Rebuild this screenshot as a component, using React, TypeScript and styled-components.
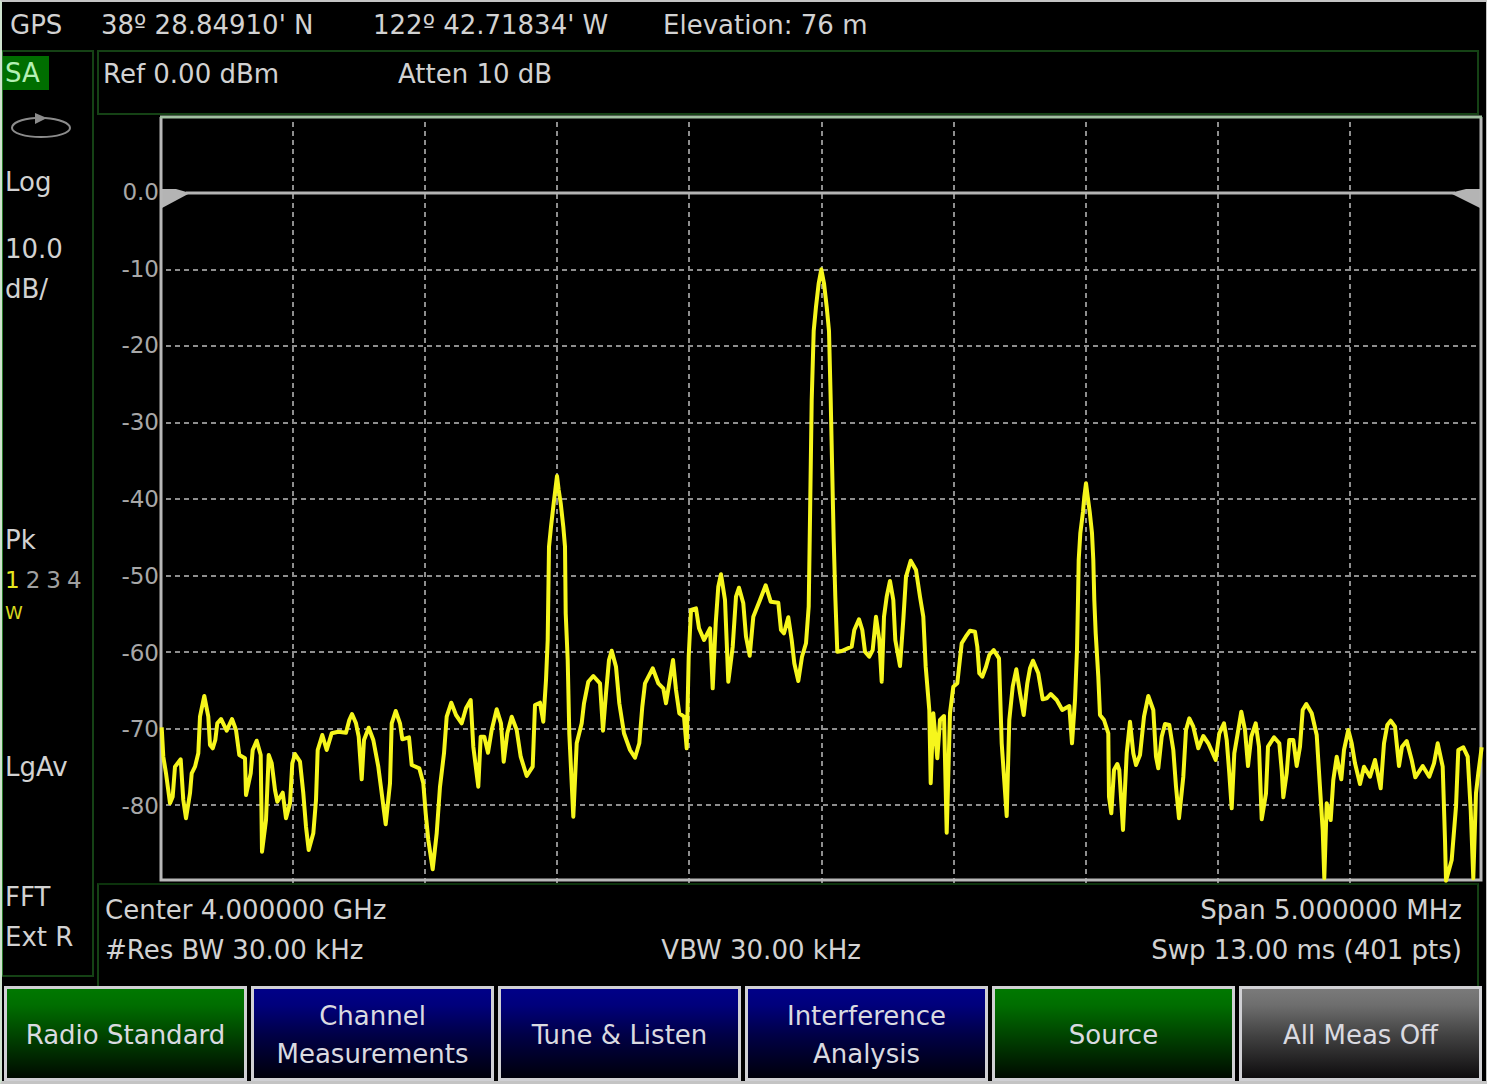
import React from "react";
import styled, { createGlobalStyle } from "styled-components";

const GlobalStyle = createGlobalStyle`
  *, *::before, *::after { box-sizing: border-box; }
  body {
    margin: 0;
    background: #000;
    color: #d2d2d2;
    font-family: "DejaVu Sans", Verdana, sans-serif;
    font-size: 26px;
    line-height: 40px;
  }
`;

const line = "#154215";

const Screen = styled.div`
  display: flex;
  flex-direction: column;
  min-height: 100vh;
  border: solid #c4c4c4;
  border-width: 2px 1px 3px 2px;
  border-left-color: #cfe3cf;
  background: #000;
`;

const GpsBar = styled.header`
  display: grid;
  grid-template-columns: 91px 272px 290px 1fr;
  padding: 3px 8px 5px;
  white-space: nowrap;
`;

const Body = styled.div`
  flex: 1;
  display: flex;
  gap: 3px;
`;

const Sidebar = styled.aside`
  display: flex;
  flex-direction: column;
  flex: 0 0 92px;
  margin-bottom: 9px;
  padding: 4px 0 18px 2px;
  border: 2px solid ${line};
  border-left: 1px solid #2a7a2a;
  white-space: nowrap;
`;

const ModeBadge = styled.div`
  align-self: flex-start;
  margin-left: -2px;
  padding: 0 9px 0 2px;
  background: #006e00;
  color: #b4f0b4;
  line-height: 34px;
`;

const SweepIcon = styled.svg`
  flex: none;
  width: 64px;
  height: 30px;
  margin: 20px 0 22px 4px;
`;

const Group = styled.div`
  & + & {
    margin-top: 27px;
  }
`;

const Spacer = styled.div<{ $grow: number }>`
  flex: ${(p) => p.$grow} 0 0;
`;

const Traces = styled.div`
  display: flex;
  gap: 6px;
  color: #a0a0a0;
  font-size: 23px;
`;

const ActiveTrace = styled.span`
  color: #e6e61e;
`;

const TraceMode = styled.div`
  color: #d8d81e;
  font-size: 18px;
  line-height: 26px;
`;

const Main = styled.main`
  flex: 1;
  display: flex;
  flex-direction: column;
  min-width: 0;
`;

const LevelBox = styled.section`
  display: grid;
  grid-template-columns: 295px 1fr;
  margin-right: 7px;
  padding: 2px 4px 19px;
  border: 2px solid ${line};
`;

const PlotArea = styled.section`
  flex: 1;
  display: flex;
`;

const Scale = styled.div`
  display: grid;
  grid-template-rows: 1fr repeat(9, 2fr) 1fr;
  align-items: center;
  justify-items: end;
  flex: 0 0 63px;
  padding-right: 1px;
  color: #a8a8a8;
  font-size: 23px;
  line-height: 26px;
`;

const Plot = styled.svg`
  flex: 1;
  min-width: 0;
  height: auto;
  min-height: 400px;
  overflow: visible;
`;

const SweepBox = styled.section`
  margin-right: 7px;
  padding: 5px 15px 16px 6px;
  border: 2px solid ${line};
  border-bottom: 0;
  border-top-color: #0c330c;
`;

const SweepRow = styled.div`
  display: flex;
  white-space: nowrap;
`;

const SweepStart = styled.span`
  flex: 0 0 41%;
`;

const SweepEnd = styled.span`
  margin-left: auto;
`;

const fills = {
  green: "linear-gradient(#007a00, #006e00 20%, #003c00 58%, #000600)",
  blue: "linear-gradient(#00008a, #00007c 20%, #000046 52%, #000006)",
  gray: "linear-gradient(#7c7c7c, #6e6e6e 20%, #424242 52%, #0a080a)",
};

const Softkeys = styled.nav`
  display: grid;
  grid-template-columns: repeat(6, minmax(0, 1fr));
  gap: 4px;
  padding: 0 4px 0 2px;
`;

const Softkey = styled.button<{ $fill: keyof typeof fills }>`
  height: 95px;
  padding: 2px 12px 0;
  border: 3px solid #d0d0d4;
  background: ${(p) => fills[p.$fill]};
  background-origin: border-box;
  color: #dadae0;
  font: inherit;
  line-height: 38px;
  cursor: pointer;
`;

/* Each block of the sweep has an origin in plot units; its points are in thirds of a unit. */
type Block = { x: number; y: number; points: [number, number][] };

const sweep: Block[] = [
  {
    x: 160,
    y: 640,
    points: [
      [5, 262], [10, 350], [18, 400], [30, 490], [38, 470], [45, 380], [62, 358], [70, 480], [78, 535],
      [90, 460], [95, 400], [105, 380], [115, 340], [120, 230], [133, 168], [145, 230], [150, 315],
      [158, 325], [166, 300], [172, 250], [183, 237], [200, 272], [216, 237], [228, 270], [238, 345],
      [255, 355], [258, 465], [272, 400], [278, 330], [290, 302], [302, 345], [306, 635], [318, 540],
      [326, 345], [335, 370], [345, 450], [352, 485], [368, 458], [378, 535], [390, 490], [397, 370],
      [405, 342], [420, 365], [430, 460], [438, 560], [446, 630], [460, 580], [468, 480], [473, 330],
      [487, 285], [500, 330], [515, 280], [535, 275], [558, 278], [568, 240], [576, 222], [588, 250],
      [596, 290], [605, 418], [612, 300], [626, 263], [640, 300], [655, 380], [664, 450], [677, 553],
      [690, 430], [695, 250], [707, 213], [720, 250], [727, 298], [747, 292], [755, 375], [778, 385],
      [790, 430], [797, 520], [805, 600],
    ],
  },
  {
    x: 430,
    y: 460,
    points: [
      [8, 1228], [20, 1120], [30, 980], [42, 880], [50, 770], [64, 728], [78, 765], [95, 790],
      [108, 745], [122, 720], [130, 860], [145, 980], [152, 830], [163, 830], [174, 878], [185, 810],
      [200, 748], [213, 790], [221, 905], [232, 820], [245, 770], [260, 810], [272, 890], [290, 948],
      [308, 920], [315, 735], [330, 728], [340, 785], [348, 660], [353, 540], [357, 260], [363, 200],
      [371, 130], [376, 90], [381, 48], [386, 90], [392, 130], [400, 200], [405, 260], [407, 460],
      [413, 600], [418, 820], [430, 1070], [440, 850],
      [455, 790], [462, 730], [475, 665], [490, 648], [510, 670], [519, 812], [528, 700], [537, 600],
      [545, 572], [558, 620], [568, 730], [582, 820], [600, 870], [615, 893], [628, 850], [637, 740],
      [645, 670], [668, 625], [685, 670], [700, 685], [708, 730], [716, 680], [729, 600], [738, 690],
      [748, 760], [762, 770],
    ],
  },
  {
    x: 660,
    y: 540,
    points: [
      [80, 625], [86, 350], [93, 210], [108, 205], [117, 265], [132, 300], [150, 265], [158, 445],
      [167, 250], [175, 140], [183, 103], [195, 180], [205, 425], [218, 320], [228, 170], [237, 143],
      [250, 190], [258, 290], [269, 347], [280, 230], [300, 180], [317, 136], [332, 185], [355, 188],
      [363, 270], [372, 280], [385, 232], [395, 300], [403, 370], [415, 423], [426, 350], [438, 310],
      [446, 200], [449, 0], [455, -420], [461, -627], [468, -700], [476, -770], [484, -812],
      [492, -770], [500, -700], [507, -627], [512, -420], [521, 0], [526, 170], [532, 335],
      [545, 333], [575, 320], [583, 270],
      [597, 238], [607, 270], [615, 335], [628, 350], [638, 330], [648, 230], [658, 300], [665, 425],
      [672, 230], [680, 170], [690, 123], [700, 180], [706, 300], [720, 378], [730, 240], [738, 110],
      [752, 62], [768, 90], [780, 170], [790, 230], [797, 380], [808, 510], [812, 730], [820, 520],
      [832, 655], [840, 540], [852, 528],
    ],
  },
  {
    x: 900,
    y: 600,
    points: [
      [140, 698], [150, 340], [160, 260], [172, 250], [185, 130], [197, 110], [210, 92], [225, 95],
      [232, 140], [238, 220], [247, 230], [258, 200], [268, 165], [281, 150], [297, 175], [305, 430],
      [320, 648], [328, 360], [338, 260], [349, 208], [360, 280], [371, 345], [382, 250], [390, 205],
      [399, 182], [415, 220], [428, 298], [440, 295], [452, 282], [470, 300], [487, 330], [508, 318],
      [516, 430], [525, 300], [531, 150], [534, 0], [536, -120], [541, -200], [549, -265],
      [553, -310], [558, -350], [563, -310], [569, -265], [576, -200], [580, -120], [583, 0],
      [587, 100], [595, 230], [600, 345], [612, 360], [625, 400],
      [627, 590], [634, 640], [642, 510], [652, 492], [658, 510], [669, 690], [680, 460], [690, 365],
      [700, 460], [708, 495], [720, 465], [732, 350], [745, 288], [760, 330], [768, 470], [775, 505],
      [785, 410], [795, 372], [808, 375], [820, 450], [828, 560], [837, 655],
    ],
  },
  {
    x: 1180,
    y: 660,
    points: [
      [10, 350], [18, 210], [28, 175], [40, 200], [55, 265], [70, 228], [85, 250], [107, 300],
      [118, 220], [132, 190], [140, 240], [148, 340], [155, 445], [163, 280], [173, 220], [184, 155],
      [195, 210], [204, 318], [214, 230], [227, 190], [237, 260], [245, 478], [258, 400], [264, 260],
      [282, 232], [298, 250], [305, 330], [310, 412], [320, 340], [328, 240], [340, 240], [350, 318],
      [360, 260], [368, 150], [379, 132], [395, 160], [410, 225], [418, 350], [428, 510], [433, 655],
      [440, 430], [452, 480], [460, 360], [470, 290], [484, 358], [492, 270], [505, 210], [515, 250],
      [525, 310], [540, 372], [552, 320], [570, 350], [585, 300], [602, 385], [612, 250], [622, 195],
      [632, 182], [645, 200], [657, 318], [666, 260], [680, 243], [695, 300], [706, 352], [728, 318],
      [748, 350], [762, 310], [773, 250], [788, 320], [795, 540], [798, 662], [815, 600], [828, 440],
      [835, 270], [850, 262], [863, 290], [872, 450], [880, 655], [888, 400], [895, 340], [905, 262],
    ],
  },
];

const tracePoints = sweep
  .flatMap((b) => b.points.map(([x, y]) => `${(b.x + x / 3).toFixed(1)},${(b.y + y / 3).toFixed(1)}`))
  .join(" ");

const levels = ["0.0", "-10", "-20", "-30", "-40", "-50", "-60", "-70", "-80"];
const columns = [293, 425, 557, 689, 822, 954, 1086, 1218, 1350];
const rows = [270, 346, 423, 499, 576, 652, 729, 805];

const softkeys: { label: string; fill: keyof typeof fills }[] = [
  { label: "Radio Standard", fill: "green" },
  { label: "Channel Measurements", fill: "blue" },
  { label: "Tune & Listen", fill: "blue" },
  { label: "Interference Analysis", fill: "blue" },
  { label: "Source", fill: "green" },
  { label: "All Meas Off", fill: "gray" },
];

function Spectrum() {
  return (
    <Plot viewBox="160 115 1326 768" preserveAspectRatio="none" role="img" aria-label="Spectrum trace">
      <g stroke="#8e8e8e" strokeWidth="2" strokeDasharray="5 4">
        {columns.map((x) => (
          <line key={x} x1={x} x2={x} y1="122" y2="884" />
        ))}
        {rows.map((y) => (
          <line key={y} x1="166" x2="1480" y1={y} y2={y} />
        ))}
      </g>
      <path d="M186 193H1455" stroke="#b4b4b4" strokeWidth="3" />
      <path d="M162 189h14l14 4-28 15zM1480 189h-14l-16 4 30 15z" fill="#b4b4b4" />
      <path d="M161 117V880H1481V117" fill="none" stroke="#b8b8b8" strokeWidth="3" />
      <path d="M160 117H1482" stroke="#a0c0a0" strokeWidth="3" />
      <polyline
        points={tracePoints}
        fill="none"
        stroke="#f6f61c"
        strokeWidth="4"
        strokeLinejoin="round"
      />
    </Plot>
  );
}

export default function App() {
  return (
    <>
      <GlobalStyle />
      <Screen>
        <GpsBar>
          <span>GPS</span>
          <span>38º 28.84910' N</span>
          <span>122º 42.71834' W</span>
          <span>Elevation: 76 m</span>
        </GpsBar>
        <Body>
          <Sidebar>
            <ModeBadge>SA</ModeBadge>
            <SweepIcon viewBox="0 0 64 30" aria-hidden="true">
              <path
                d="M26 8C12 9 3 13 3 18c0 5 13 9 29 9s29-4 29-9c0-5-11-9-25-10"
                fill="none"
                stroke="#8c8c8c"
                strokeWidth="2"
              />
              <path d="M26 3l12 5-12 6z" fill="#8c8c8c" />
            </SweepIcon>
            <Group>Log</Group>
            <Group>
              <div>10.0</div>
              <div>dB/</div>
            </Group>
            <Spacer $grow={7} />
            <Group>
              <div>Pk</div>
              <Traces>
                <ActiveTrace>1</ActiveTrace>
                <span>2</span>
                <span>3</span>
                <span>4</span>
              </Traces>
              <TraceMode>W</TraceMode>
            </Group>
            <Spacer $grow={4} />
            <Group>LgAv</Group>
            <Spacer $grow={3} />
            <Group>
              <div>FFT</div>
              <div>Ext R</div>
            </Group>
          </Sidebar>
          <Main>
            <LevelBox>
              <span>Ref 0.00 dBm</span>
              <span>Atten 10 dB</span>
            </LevelBox>
            <PlotArea>
              <Scale>
                <span />
                {levels.map((l) => (
                  <span key={l}>{l}</span>
                ))}
              </Scale>
              <Spectrum />
            </PlotArea>
            <SweepBox>
              <SweepRow>
                <span>Center 4.000000 GHz</span>
                <SweepEnd>Span 5.000000 MHz</SweepEnd>
              </SweepRow>
              <SweepRow>
                <SweepStart>#Res BW 30.00 kHz</SweepStart>
                <span>VBW 30.00 kHz</span>
                <SweepEnd>Swp 13.00 ms (401 pts)</SweepEnd>
              </SweepRow>
            </SweepBox>
          </Main>
        </Body>
        <Softkeys aria-label="Measurement softkeys">
          {softkeys.map((k) => (
            <Softkey key={k.label} type="button" $fill={k.fill}>
              {k.label}
            </Softkey>
          ))}
        </Softkeys>
      </Screen>
    </>
  );
}
